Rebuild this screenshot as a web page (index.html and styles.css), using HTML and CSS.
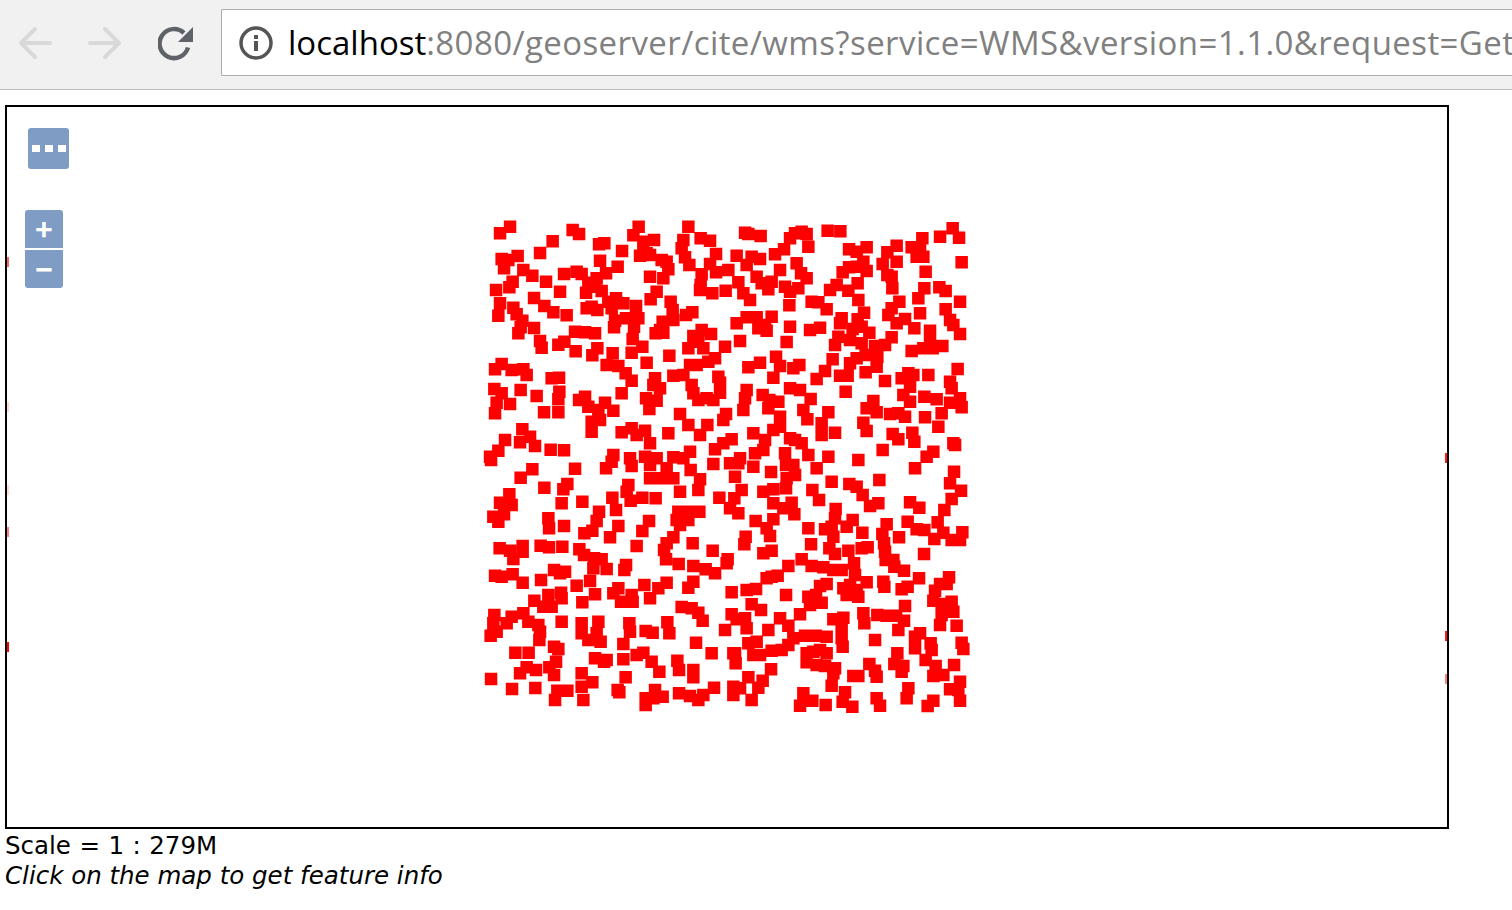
FILE: index.html
```html
<!DOCTYPE html>
<html lang="en">
  <head>
    <meta charset="UTF-8" />
    <title>cite:points</title>
    <link rel="stylesheet" href="styles.css">
  </head>
  <body>
    <header class="toolbar">
      <svg class="nav-icon" width="36" height="36" viewBox="0 0 36 36"><path class="nav-icon__off" d="M33 18H4M18 4 4 18l14 14"/></svg>
      <svg class="nav-icon" width="36" height="36" viewBox="0 0 36 36"><path class="nav-icon__off" d="M3 18h29M18 4l14 14-14 14"/></svg>
      <div class="reload">
        <svg width="36" height="36" viewBox="0 0 36 36"><path class="reload__arc" d="M30 22.500A14.500 14.500 0 1 1 26 8"/><path class="reload__head" d="M35 2v15H20z"/></svg>
      </div>
      <div class="address">
        <svg class="address__info" width="34" height="34" viewBox="0 0 34 34"><circle cx="17" cy="17" r="15" /><rect x="15" y="15" width="4" height="10"/><rect x="15" y="9" width="4" height="4"/></svg>
        <span class="address__host">localhost</span><span class="address__rest">:8080/geoserver/cite/wms?service=WMS&amp;version=1.1.0&amp;request=Get</span>
      </div>
    </header>
    <main class="page">
      <div class="map">
        <svg class="map__layer" id="layer" width="1440" height="720" viewBox="0 0 1440 720"></svg>
        <div class="overview-btn"><i></i><i></i><i></i></div>
        <div class="zoom">
          <div class="zoom__btn">+</div>
          <div class="zoom__btn">−</div>
        </div>
      </div>
      <div class="scale">Scale = 1 : 279M</div>
      <div class="hint">Click on the map to get feature info</div>
    </main>
    <script src="map.js"></script>
  </body>
</html>
```

FILE: styles.css
```css
* {
  margin: 0;
  padding: 0;
  box-sizing: border-box;
}

html,
body {
  height: 100%;
  overflow: hidden;
}

body {
  background-color: #fff;
  font-family: 'DejaVu Sans', sans-serif;
  color: #000;
}

.toolbar {
  height: 90px;
  padding: 9px 0 13px 17px;
  display: flex;
  align-items: center;
  background-color: #f1f1f1;
  border-bottom: 1px solid #bcbcbc;
}

.nav-icon {
  margin-right: 34px;
}

.nav-icon__off {
  fill: none;
  stroke: #d9d9d9;
  stroke-width: 4;
  stroke-linecap: round;
  stroke-linejoin: round;
}

.reload {
  width: 60px;
  height: 60px;
  margin: 0 15px 0 -11px;
  display: flex;
  align-items: center;
  justify-content: center;
}

.reload__arc {
  fill: none;
  stroke: #5f6368;
  stroke-width: 4.500;
}

.reload__head {
  fill: #5f6368;
}

.address {
  flex: 1;
  height: 67px;
  min-width: 0;
  padding-left: 17px;
  display: flex;
  align-items: center;
  white-space: nowrap;
  background-color: #fff;
  border: 1px solid #adadad;
  border-right: none;
  border-radius: 2px 0 0 2px;
  font-family: 'Open Sans', sans-serif;
  font-size: 33px;
}

.address__info {
  flex: none;
  margin-right: 15px;
}

.address__info circle {
  fill: none;
  stroke: #555;
  stroke-width: 3.500;
}

.address__info rect {
  fill: #555;
}

.address__host {
  color: #000;
}

.address__rest {
  color: #808080;
  letter-spacing: 0.41px;
}

.page {
  padding: 15px 0 0 5px;
}

.map {
  position: relative;
  width: 1444px;
  height: 724px;
  border: 2px solid #000;
  overflow: hidden;
}

.map__layer {
  display: block;
}

.map__layer path {
  fill: #f00;
  filter: blur(0.6px);
}

.overview-btn {
  position: absolute;
  top: 21px;
  left: 21px;
  width: 41px;
  height: 41px;
  display: flex;
  align-items: center;
  justify-content: center;
  gap: 5px;
  background-color: #7f9dc4;
  border-radius: 3px;
}

.overview-btn i {
  width: 8px;
  height: 7px;
  background-color: #fff;
}

.zoom {
  position: absolute;
  top: 103px;
  left: 18px;
  width: 38px;
  display: flex;
  flex-direction: column;
  gap: 2px;
}

.zoom__btn {
  height: 38px;
  display: flex;
  align-items: center;
  justify-content: center;
  background-color: #7f9dc4;
  color: #fff;
  font-size: 23px;
  font-weight: 700;
  line-height: 1;
  -webkit-text-stroke: 0.7px #fff;
}

.zoom__btn:first-child {
  border-radius: 3px 3px 0 0;
}

.zoom__btn:last-child {
  border-radius: 0 0 3px 3px;
}

.scale,
.hint {
  font-size: 24.500px;
  line-height: 30px;
}

.scale {
  margin-top: 2px;
  word-spacing: 0.7px;
}

.hint {
  font-style: italic;
}
```

FILE: map.js
```js
'use strict';

// squares read off the reference, in 3x coords of two crops
const upper = [[90,50],[60,70],[278,60],[297,72],[218,94],[180,129],[357,103],[373,100],[476,50],[460,76],[490,95],[522,90],[426,123],[625,50],[662,85],[690,92],[610,90],[605,115],[795,68],[805,72],[842,78],[930,85],[945,70],[965,65],[980,72],[985,110],[912,118],[885,133],[1043,62],[1081,64],[1107,118],[1130,125],[1160,112],[1327,85],[1380,80],[1418,55],[1437,83],[1250,107],[1222,127],[1295,112],[1320,118],[1310,140],[1330,140],[1445,157],[1337,185],[1250,155],[1208,162],[1222,195],[1235,200],[1237,235],[1150,155],[1130,170],[1107,172],[1088,187],[1160,183],[65,147],[85,150],[113,138],[72,175],[130,180],[157,197],[198,215],[252,192],[290,185],[305,192],[378,190],[413,170],[360,152],[350,205],[325,218],[345,230],[365,243],[318,248],[240,245],[98,215],[88,232],[48,240],[60,280],[55,317],[100,293],[110,313],[127,332],[122,352],[115,370],[162,354],[162,264],[193,288],[220,307],[260,316],[180,393],[185,413],[235,404],[253,395],[287,424],[285,365],[315,367],[345,370],[352,415],[337,436],[398,430],[380,465],[415,468],[437,490],[455,512],[455,428],[487,410],[458,387],[500,458],[568,437],[510,200],[490,120],[500,130],[480,137],[510,135],[545,150],[560,155],[565,178],[550,205],[530,245],[512,268],[572,275],[578,300],[580,330],[548,335],[540,360],[527,370],[550,368],[618,315],[637,307],[408,265],[385,275],[395,295],[430,280],[468,288],[320,295],[352,300],[335,290],[475,325],[438,325],[405,332],[402,352],[462,350],[615,142],[628,165],[665,193],[662,225],[660,240],[708,132],[690,162],[708,187],[697,250],[737,242],[745,180],[770,137],[815,140],[840,147],[800,165],[775,217],[790,250],[810,270],[830,200],[845,220],[875,215],[865,238],[900,180],[950,160],[963,190],[980,205],[915,230],[955,235],[930,245],[928,286],[995,275],[1015,277],[1040,298],[1050,240],[1070,225],[1105,242],[1133,220],[1135,270],[1152,308],[1133,328],[1085,325],[1080,340],[1118,357],[1145,350],[1168,368],[1075,380],[1065,405],[1110,390],[1145,400],[1185,408],[1215,405],[1235,382],[1157,435],[1130,445],[1110,460],[1058,448],[1035,483],[1010,507],[1080,497],[1103,497],[1157,487],[1192,440],[1190,470],[1215,513],[1097,545],[1295,423],[1330,415],[1358,415],[1387,408],[1303,355],[1350,362],[1350,378],[1440,372],[1420,345],[1410,330],[1397,298],[1440,275],[1315,265],[1333,235],[1378,232],[1397,243],[1320,310],[1258,275],[1225,315],[1235,295],[1275,327],[1250,340],[875,320],[855,345],[860,362],[830,322],[800,322],[770,340],[835,355],[930,350],[920,396],[990,360],[1020,353],[780,393],[735,410],[693,372],[665,360],[640,378],[655,395],[625,415],[670,415],[705,445],[685,455],[650,465],[630,465],[610,495],[580,497],[715,500],[720,518],[635,525],[640,550],[655,570],[680,565],[700,570],[720,548],[840,458],[805,472],[888,440],[900,468],[940,475],[958,465],[880,503],[930,535],[960,540],[992,567],[1045,607],[970,600],[982,628],[1025,640],[1025,675],[1065,668],[45,478],[65,462],[95,480],[130,478],[140,495],[215,505],[237,503],[43,537],[65,550],[50,578],[45,610],[90,582],[122,540],[170,558],[238,545],[235,568],[192,607],[235,607],[127,658],[150,680],[120,697],[165,708],[75,690],[55,722],[30,740],[212,719],[252,721],[297,570],[315,560],[325,590],[375,578],[400,602],[355,600],[360,630],[335,635],[335,665],[425,550],[425,667],[455,655],[470,675],[495,662],[510,700],[565,670],[525,505],[520,525],[540,535],[498,565],[530,572],[508,597],[600,612],[625,645],[660,675],[682,645],[730,630],[738,612],[755,688],[730,700],[705,718],[820,670],[855,690],[900,650],[880,660],[900,620],[895,575],[868,570],[865,595],[848,555],[800,540],[795,565],[790,600],[1180,573],[1160,595],[1190,607],[1230,612],[1255,610],[1275,620],[1270,555],[1290,575],[1285,490],[1300,495],[1265,505],[1290,530],[1333,560],[1370,568],[1345,495],[1410,515],[1415,535],[1440,565],[1410,578],[1445,592],[1385,610],[1375,650],[1335,622],[1150,638],[1160,663],[1238,672],[1255,688],[1297,668],[1303,695],[1433,477],[1425,705],[1420,700],[945,690],[930,685],[965,700],[915,730],[985,735],[1045,740],[1135,750],[1208,720],[1360,725],[1340,740],[400,735],[450,745],[495,740],[530,745],[580,742],[630,725],[610,745],[850,720],[825,730],[780,745]];

const lower = [[33,0],[157,28],[122,53],[285,26],[193,83],[262,72],[250,88],[245,130],[307,125],[397,113],[445,75],[440,95],[452,122],[487,113],[527,115],[378,25],[395,5],[455,18],[510,15],[510,55],[545,55],[580,55],[560,25],[632,30],[660,58],[655,90],[600,95],[700,12],[750,10],[775,10],[765,50],[785,90],[820,20],[873,36],[918,15],[940,15],[945,45],[920,55],[918,85],[850,95],[880,88],[1010,25],[1055,65],[1108,72],[1130,80],[1148,105],[1198,60],[1305,25],[1422,35],[1410,70],[1443,92],[1415,117],[1393,150],[1290,127],[1318,143],[1195,130],[1170,138],[1017,120],[997,90],[1067,147],[880,130],[935,128],[910,145],[943,163],[718,113],[763,115],[750,145],[775,160],[658,155],[625,155],[595,155],[590,180],[625,180],[600,195],[88,103],[60,128],[95,135],[40,170],[72,163],[55,185],[205,175],[207,205],[252,198],[357,155],[350,183],[337,212],[313,220],[408,150],[415,198],[390,232],[507,183],[487,213],[827,183],[880,178],[860,205],[870,228],[985,205],[1065,175],[1055,200],[1035,208],[1060,230],[1118,180],[1100,200],[1147,218],[1220,193],[1207,222],[1212,250],[1257,232],[1283,185],[1310,208],[1333,210],[1373,187],[1390,218],[1363,237],[1415,240],[1447,217],[1440,240],[1332,282],[797,230],[793,253],[638,250],[580,232],[560,250],[552,270],[558,298],[698,272],[993,253],[1048,265],[1065,282],[1105,272],[1145,265],[1163,262],[1215,275],[1217,300],[1240,300],[1243,320],[1272,332],[59,265],[90,272],[128,258],[128,275],[100,297],[182,257],[207,262],[247,260],[298,268],[312,285],[342,295],[365,298],[340,325],[380,327],[438,315],[433,330],[470,258],[743,298],[740,310],[596,312],[640,318],[677,328],[705,340],[850,280],[875,272],[925,318],[965,298],[995,318],[1030,322],[1060,330],[1085,330],[1122,310],[1125,345],[1040,372],[1020,378],[1008,405],[985,410],[990,435],[1025,428],[960,463],[918,405],[860,355],[893,347],[875,350],[1317,355],[1210,365],[1213,380],[1283,380],[1265,388],[1407,352],[1380,372],[1400,372],[1365,392],[1360,422],[1415,425],[1385,432],[1420,455],[1385,465],[1380,495],[1430,497],[1275,438],[1090,385],[1110,375],[1160,367],[1130,390],[1100,405],[1135,410],[45,347],[65,350],[98,343],[128,368],[183,360],[222,330],[255,335],[240,340],[290,377],[330,363],[415,385],[400,400],[345,403],[307,427],[205,405],[243,398],[245,415],[163,422],[190,440],[215,440],[423,425],[455,405],[458,425],[510,415],[535,385],[560,368],[493,375],[625,383],[640,365],[755,397],[800,390],[828,387],[815,433],[843,450],[605,441],[635,445],[655,458],[668,482],[755,463],[770,478],[795,475],[735,510],[800,505],[805,550],[830,545],[820,585],[840,585],[865,510],[875,572],[905,570],[925,555],[940,535],[975,527],[1007,527],[1040,530],[900,475],[925,497],[1060,478],[1090,473],[1085,510],[1085,535],[1088,560],[1150,460],[1153,490],[1192,465],[1220,467],[1248,467],[1272,482],[1255,510],[1320,520],[1305,530],[1185,540],[1352,550],[1305,565],[1355,570],[1445,548],[1450,567],[1252,580],[1243,612],[1270,618],[1265,635],[1337,600],[1367,618],[1360,648],[1390,645],[1422,615],[1440,665],[1410,688],[1435,690],[1440,722],[1360,722],[1343,738],[1285,685],[1280,715],[1190,715],[1200,737],[1168,612],[1185,632],[1190,650],[1120,648],[1135,648],[1065,625],[1060,640],[1055,677],[1095,697],[1088,725],[1117,740],[1037,735],[997,722],[960,737],[970,700],[980,580],[1000,575],[1020,570],[1040,580],[980,607],[1010,615],[1035,618],[873,628],[848,662],[835,683],[805,652],[765,580],[760,580],[767,610],[760,680],[780,685],[760,705],[815,720],[702,683],[670,705],[655,720],[630,708],[597,700],[695,580],[648,548],[43,465],[40,490],[95,470],[130,460],[145,485],[175,495],[180,515],[178,540],[32,527],[50,515],[80,490],[245,485],[305,490],[355,485],[305,520],[350,520],[325,540],[362,545],[448,490],[450,515],[497,513],[518,518],[562,487],[568,520],[430,552],[222,560],[235,567],[106,578],[146,578],[228,605],[208,622],[222,645],[168,630],[140,622],[120,640],[345,595],[380,600],[372,605],[430,598],[470,585],[490,578],[515,605],[538,635],[437,652],[305,640],[337,667],[305,680],[592,602],[597,630],[640,630],[640,652],[33,657],[96,687],[166,684],[232,692],[262,692],[225,720],[310,720],[413,690],[418,697],[497,715],[497,735],[525,690],[548,710],[520,715]];

// slivers of the wrapped world at both map edges: [x, y, opacity]
const edges = [[0,155,0.6],[0,300,0.15],[0,383,0.15],[0,425,0.5],[0,540,1],[1438,351,0.9],[1438,529,0.9],[1438,572,0.5]];

const layer = document.getElementById('layer');
const SIZE = 12.5;
// crop origin minus the map's inner corner at (7,107)
const square = (x, y) => `M${x.toFixed(1)} ${y.toFixed(1)}h${SIZE}v${SIZE}h-${SIZE}z`;

let d = '';
upper.forEach(([x, y]) => {
  d += square(473 + x / 3 - SIZE / 2, 103 + y / 3 - SIZE / 2);
});
lower.forEach(([x, y]) => {
  d += square(473 + x / 3 - SIZE / 2, 353 + y / 3 - SIZE / 2);
});

const addPath = function (pathData, opacity) {
  const p = document.createElementNS('http://www.w3.org/2000/svg', 'path');
  p.setAttribute('d', pathData);
  p.setAttribute('opacity', opacity);
  layer.appendChild(p);
};

addPath(d, 1);
edges.forEach(([x, y, o]) => addPath(`M${x} ${y - 5}h2v10h-2z`, o));
```
